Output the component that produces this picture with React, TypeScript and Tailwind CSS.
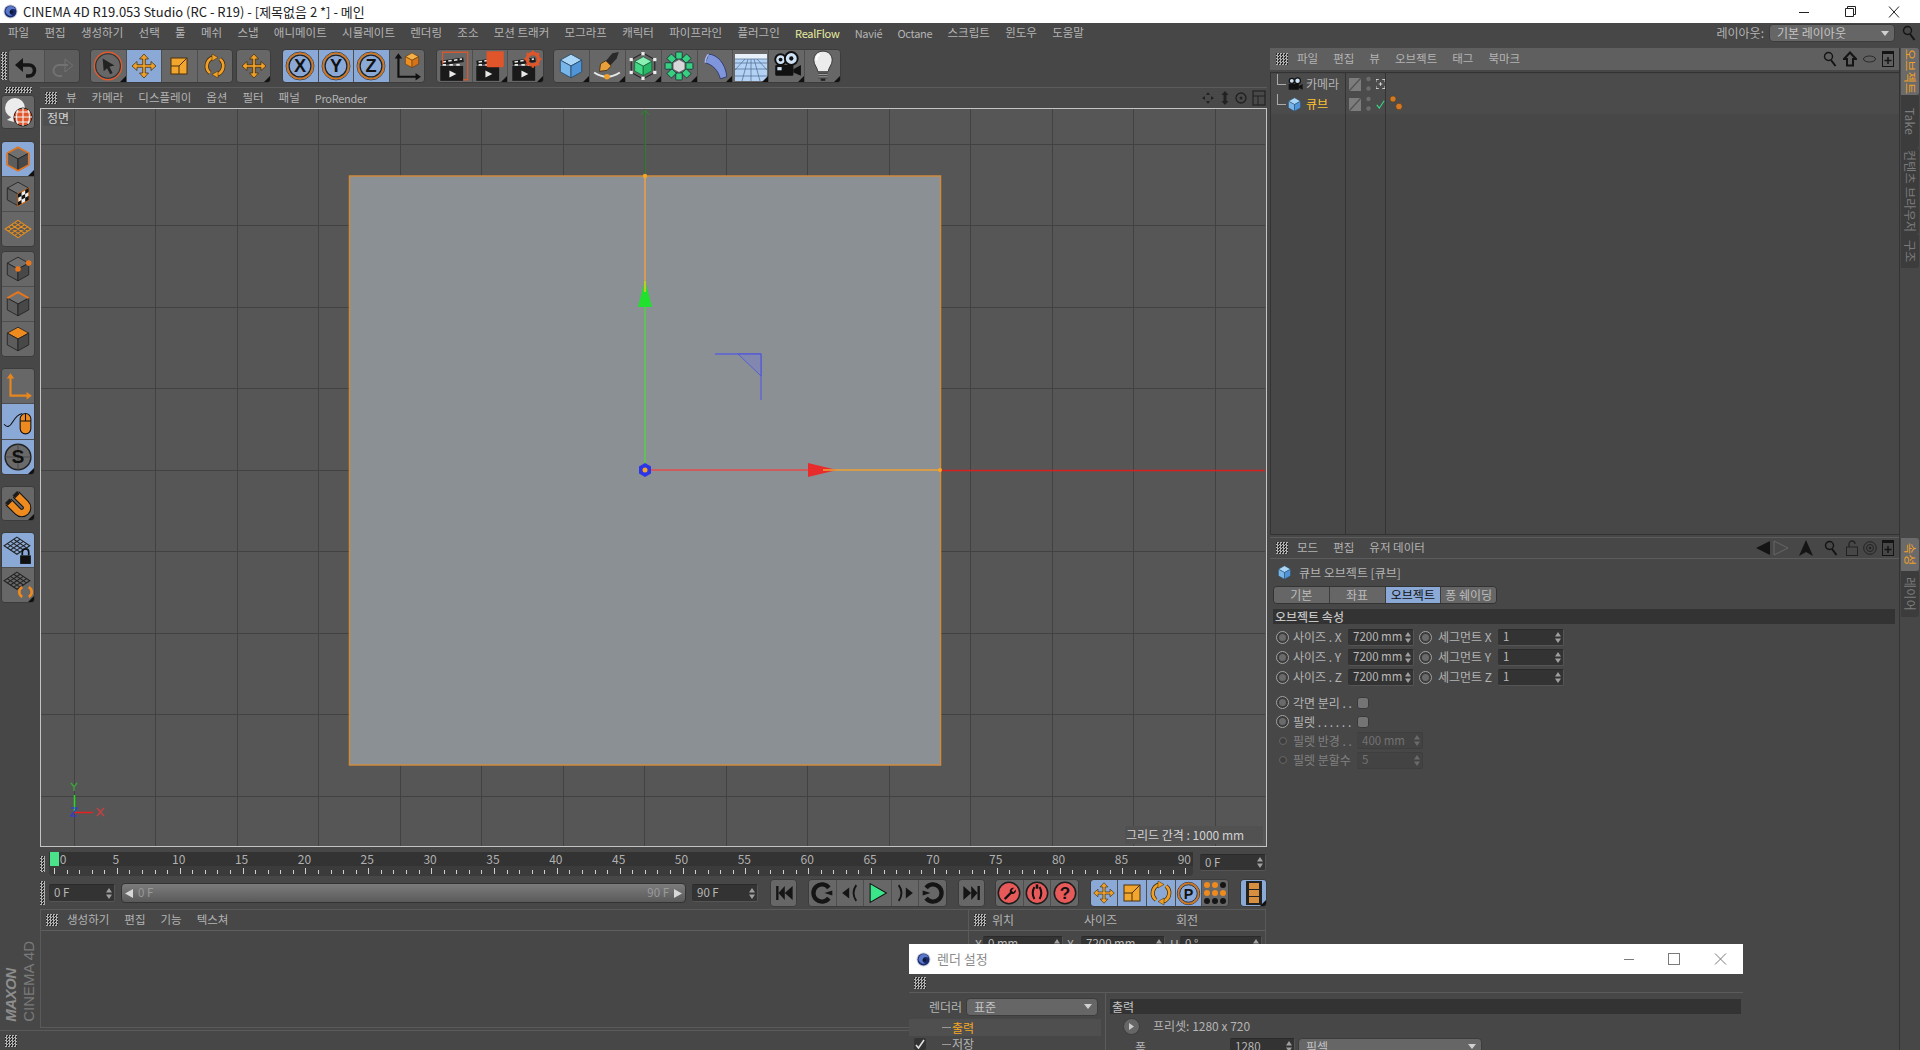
import React from "react"

const ORANGE = "#f0a028"
const MOVE_PATH = "M14 2l4.5 5H15.3v5.7H21V9.500l5 4.500-5 4.500V15.300H15.300V21h3.200L14 26l-4.500-5h3.200V15.300H7v3.200L2 14l5-4.500v3.200h5.700V7H9.500z"

function Grip({ className }: { className: string }) {
  return <div className={"shrink-0 bg-[image:repeating-conic-gradient(#b0b0b0_0%_25%,#2a2a2a_0%_50%)] bg-[length:3px_3px] " + className} />
}

function Ico({ children, size = 28 }: { children: React.ReactNode; size?: number }) {
  return (
    <svg viewBox="0 0 28 28" width={size} height={size} className="shrink-0">
      {children}
    </svg>
  )
}

function Cube({ top = "#a9d6f7", left = "#78b6ea", right = "#4f95d8", stroke = "#2a4a66" }) {
  return (
    <g stroke={stroke} strokeWidth="0.8" strokeLinejoin="round">
      <path d="M14 3l10 5.5-10 5.5L4 8.5z" fill={top} />
      <path d="M4 8.5l10 5.5v11L4 19.5z" fill={left} />
      <path d="M24 8.5l-10 5.5v11l10-5.5z" fill={right} />
    </g>
  )
}

const GrayCube = () => <Cube top="#707070" left="#5c5c5c" right="#484848" stroke="#222" />

function MoveIcon({ size = 28 }: { size?: number }) {
  return (
    <Ico size={size}>
      <path d={MOVE_PATH} fill={ORANGE} stroke="#3a2608" strokeWidth="0.7" />
    </Ico>
  )
}

function ScaleIcon() {
  return (
    <Ico>
      <rect x="6" y="6" width="16" height="16" fill="#f2a62e" stroke="#4a300c" />
      <path d="M6 14h8v8M14 14l8-8" fill="none" stroke="#4a300c" />
    </Ico>
  )
}

function RotateIcon() {
  return (
    <Ico>
      <g fill="none" stroke="#3a2608" strokeWidth="4.2">
        <path d="M9 21A9 9 0 0 1 12 5.500" />
        <path d="M19 7A9 9 0 0 1 16 22.500" />
      </g>
      <g fill="none" stroke={ORANGE} strokeWidth="2.800">
        <path d="M9 21A9 9 0 0 1 12 5.500" />
        <path d="M19 7A9 9 0 0 1 16 22.500" />
      </g>
      <path d="M11 2l6 3.500-6 3.500zM17 19l-6 3.500 6 3.500z" fill={ORANGE} stroke="#3a2608" strokeWidth="0.5" />
    </Ico>
  )
}

function SelectIcon() {
  return (
    <Ico size={30}>
      <circle cx="14" cy="14" r="12.8" fill="none" stroke="#e05a2a" strokeWidth="1.3" />
      <circle cx="14" cy="14" r="11.5" fill="none" stroke="#2f2f2f" strokeWidth="1" />
      <path d="M9 7l11 6.500-4.700 1.300 3 5.700-2.200 1.200-3-5.700L10 19z" fill="#222" />
    </Ico>
  )
}

function AxisLetter({ l }: { l: string }) {
  return (
    <Ico size={30}>
      <circle cx="14" cy="14" r="13" fill="none" stroke="#2a2a2a" strokeWidth="0.8" />
      <circle cx="14" cy="14" r="11.8" fill="none" stroke="#d4761c" strokeWidth="1.8" />
      <circle cx="14" cy="14" r="10.2" fill="none" stroke="#222" strokeWidth="1.2" />
      <text x="14" y="20" textAnchor="middle" fontSize="17" fontWeight="700" fontFamily="Liberation Sans" fill="#111">{l}</text>
    </Ico>
  )
}

function CoordIcon() {
  return (
    <Ico size={30}>
      <path d="M6 6v18h19" fill="none" stroke="#111" strokeWidth="2" />
      <path d="M6 2l-3.500 5h7zM27 24l-5-3.500v7z" fill="#111" />
      <g transform="translate(10 0) scale(0.62)">
        <Cube top="#f6b048" left="#ee8f22" right="#d4741a" stroke="#5a3208" />
      </g>
    </Ico>
  )
}

function Clapper({ extra }: { extra?: React.ReactNode }) {
  return (
    <Ico size={32}>
      <rect x="2" y="14" width="20" height="13" fill="#1a1a1a" />
      <path d="M2 9.500l20-3 .6 4-20 3z" fill="#1a1a1a" />
      <path d="M4 10.500l3-.5M9 9.700l3-.5M14 9l3-.5M19 8.200l2-.3M4 13h3M10 13h3M16 13h3" stroke="#e8e8e8" strokeWidth="1.4" />
      <path d="M10 18l6 3-6 3z" fill="#e8e8e8" />
      {extra}
    </Ico>
  )
}

function Gear() {
  return (
    <g>
      <circle cx="20" cy="8" r="5" fill="none" stroke="#e0562a" strokeWidth="3" />
      <path d="M20 .5v3M20 12.500v3M12.500 8h3M24.500 8h3M14.700 2.700l2 2M23.300 11.300l2 2M14.700 13.300l2-2M23.300 4.700l2-2" stroke="#e0562a" strokeWidth="2" />
    </g>
  )
}

function PenIcon() {
  return (
    <Ico size={30}>
      <path d="M19 2l6-1-2 6-10 11-4-4z" fill="#2a2a2a" />
      <path d="M13 9l5 5-4 4-7 1 1-7z" fill="#e8a03a" stroke="#3a2608" strokeWidth="0.7" />
      <path d="M2 20q12 8 24 0" fill="none" stroke="#e8e8e8" strokeWidth="1.8" />
      <circle cx="14" cy="24" r="2.6" fill={ORANGE} />
    </Ico>
  )
}

function GreenCube() {
  return (
    <Ico size={30}>
      <g transform="translate(3 3) scale(0.8)">
        <Cube top="#8af0b4" left="#40d884" right="#28b868" stroke="#145a34" />
      </g>
      <path d="M3 8l11-6 11 6v12l-11 6-11-6z" fill="none" stroke="#222" />
      <g fill="#eee">
        <rect x="1.5" y="6.5" width="3" height="3" />
        <rect x="12.5" y="1" width="3" height="3" />
        <rect x="23.5" y="6.5" width="3" height="3" />
        <rect x="1.5" y="18.5" width="3" height="3" />
        <rect x="12.5" y="24" width="3" height="3" />
        <rect x="23.5" y="18.5" width="3" height="3" />
      </g>
    </Ico>
  )
}

function FlowerIcon() {
  const petals = [0, 45, 90, 135, 180, 225, 270, 315]
  return (
    <Ico size={30}>
      {petals.map((a) => (
        <rect key={a} x="11" y="1" width="6" height="6.500" rx="0.5" fill="#38d080" stroke="#123" strokeWidth="0.7" transform={`rotate(${a} 14 14)`} />
      ))}
      <path d="M14 8l5.500 3v6L14 20l-5.500-3v-6z" fill="#d8d8d8" stroke="#555" strokeWidth="0.6" />
    </Ico>
  )
}

function BendIcon() {
  return (
    <Ico size={30}>
      <path d="M8 3c8 0 16 9 17 21l-6 2c-2-8-7-13-14-15z" fill="#7f95dc" stroke="#2c3566" strokeWidth="0.8" />
      <path d="M8 3c-2 2-3 5-3 8" fill="none" stroke="#aab8ee" strokeWidth="1.5" />
    </Ico>
  )
}

function FloorIcon() {
  return (
    <svg width="32" height="32" viewBox="0 0 32 32">
      <rect x="0" y="4" width="32" height="5" fill="#e8f0fa" />
      <rect x="0" y="9" width="32" height="22" fill="#b4d2f4" />
      <g stroke="#4a6a90" strokeWidth="0.7">
        <path d="M0 9h32M0 13h32M0 19h32M0 26h32M10 9L0 20M13 9L7 31M16 9v22M19 9l6 22M22 9l10 11" />
      </g>
    </svg>
  )
}

function CameraIcon() {
  return (
    <Ico size={30}>
      <circle cx="8" cy="8" r="5" fill="#cfe2f6" stroke="#111" strokeWidth="1.8" />
      <circle cx="8" cy="8" r="1.8" fill="#111" />
      <circle cx="18" cy="7" r="6" fill="#cfe2f6" stroke="#111" strokeWidth="1.8" />
      <circle cx="18" cy="7" r="2" fill="#111" />
      <rect x="3" y="13" width="17" height="10" rx="1" fill="#111" />
      <path d="M20 17l7-4v10l-7-3z" fill="#111" />
      <rect x="5" y="15" width="4" height="3" fill="#cfe2f6" />
    </Ico>
  )
}

function BulbIcon() {
  return (
    <Ico size={32}>
      <path d="M14 1c5 0 8 3.500 8 8 0 4-3 6-3.500 10h-9C9 15 6 13 6 9c0-4.500 3-8 8-8z" fill="#ececec" stroke="#333" strokeWidth="0.8" />
      <path d="M11 4c-2 1-3 3-2.500 5" fill="none" stroke="#fff" strokeWidth="2" />
      <rect x="10" y="20" width="8" height="5" fill="#444" />
      <path d="M10 21.500h8M10 23.500h8" stroke="#ccc" strokeWidth="0.6" />
      <rect x="12" y="25" width="4" height="2" fill="#222" />
    </Ico>
  )
}

function Corner() {
  return <div className="absolute right-0 bottom-0 border-[3px] border-transparent border-r-[#111] border-b-[#111]" />
}

function Btn({ children, on, tri, gray }: { children?: React.ReactNode; on?: boolean; tri?: boolean; gray?: boolean }) {
  return (
    <div
      className={
        "relative flex flex-1 items-center justify-center border-r border-[#4e4e4e] last:border-r-0 " +
        (on ? "bg-[#8aa9d6]" : gray ? "bg-[#5c5c5c]" : "bg-[#676767]")
      }
    >
      {children}
      {tri && <Corner />}
    </div>
  )
}

function Group({ w, ml, children }: { w: string; ml?: string; children: React.ReactNode }) {
  return <div className={"flex h-[34px] shrink-0 overflow-hidden rounded-[4px] border border-[#3c3c3c] " + w + " " + (ml ?? "")}>{children}</div>
}

function Toolbar() {
  return (
    <div className="flex h-[40px] shrink-0 items-start pt-[2px]">
      <Grip className="mt-[3px] ml-[1px] h-[28px] w-[6px]" />
      <Group w="w-[72px]" ml="ml-[1px]">
        <Btn>
          <Ico>
            <path d="M8 13h9a5.500 5.500 0 0 1 0 11h-3" fill="none" stroke="#151515" strokeWidth="3.6" />
            <path d="M11 6v14l-8-7z" fill="#151515" />
          </Ico>
        </Btn>
        <Btn gray>
          <Ico>
            <path d="M20 13h-9a5.500 5.500 0 0 0 0 11h3" fill="none" stroke="#727272" strokeWidth="2" />
            <path d="M17 7v13l8-6.500z" fill="none" stroke="#727272" />
          </Ico>
        </Btn>
      </Group>
      <Group w="w-[143px]" ml="ml-[10px]">
        <Btn tri><SelectIcon /></Btn>
        <Btn on><MoveIcon /></Btn>
        <Btn><ScaleIcon /></Btn>
        <Btn><RotateIcon /></Btn>
      </Group>
      <Group w="w-[35px]" ml="ml-[3px]">
        <Btn tri><MoveIcon /></Btn>
      </Group>
      <Group w="w-[143px]" ml="ml-[11px]">
        <Btn on><AxisLetter l="X" /></Btn>
        <Btn on><AxisLetter l="Y" /></Btn>
        <Btn on><AxisLetter l="Z" /></Btn>
        <Btn><CoordIcon /></Btn>
      </Group>
      <Group w="w-[108px]" ml="ml-[11px]">
        <Btn>
          <Clapper extra={<path d="M4 12V2h22v24h-4" fill="none" stroke="#d05a30" strokeWidth="1.2" />} />
        </Btn>
        <Btn tri>
          <Clapper extra={<rect x="11" y="1" width="15" height="14" rx="1" fill="#e0562a" />} />
        </Btn>
        <Btn tri>
          <Clapper extra={<Gear />} />
        </Btn>
      </Group>
      <Group w="w-[288px]" ml="ml-[9px]">
        <Btn tri><Ico size={30}><Cube /></Ico></Btn>
        <Btn tri><PenIcon /></Btn>
        <Btn tri><GreenCube /></Btn>
        <Btn tri><FlowerIcon /></Btn>
        <Btn tri><BendIcon /></Btn>
        <Btn tri><FloorIcon /></Btn>
        <Btn tri><CameraIcon /></Btn>
        <Btn tri><BulbIcon /></Btn>
      </Group>
    </div>
  )
}

function GridDiamond({ color = "#e88f1e", bg = "none" }: { color?: string; bg?: string }) {
  return (
    <g stroke={color} strokeWidth="1" fill={bg}>
      <path d="M14 6l12 8-12 8-12-8z" />
      <path d="M11 8l12 8M8 10l12 8M5 12l12 8M17 8L5 16M20 10L8 18M23 12L11 20" fill="none" />
    </g>
  )
}

function SideBtn({ children, on, tri }: { children: React.ReactNode; on?: boolean; tri?: boolean }) {
  return (
    <div className={"relative flex flex-1 items-center justify-center border-b border-[#4e4e4e] last:border-b-0 " + (on ? "bg-[#8aa9d6]" : "bg-[#676767]")}>
      {children}
      {tri && <Corner />}
    </div>
  )
}

function SideGroup({ h, mt, children }: { h: string; mt: string; children: React.ReactNode }) {
  return <div className={"ml-[1px] flex w-[34px] shrink-0 flex-col overflow-hidden rounded-[4px] border border-[#3c3c3c] " + h + " " + mt}>{children}</div>
}

function SideTools() {
  return (
    <div className="flex w-[40px] shrink-0 flex-col">
      <Grip className="ml-[5px] h-[6px] w-[27px]" />
      <SideGroup h="h-[34px]" mt="mt-[2px]">
        <SideBtn>
          <svg width="32" height="32" viewBox="0 0 32 32">
            <circle cx="13" cy="12" r="10" fill="#ececec" />
            <path d="M5 24l6-4 1 6z" fill="#eee" />
            <circle cx="21" cy="21" r="9" fill="#e0562a" stroke="#222" />
            <path d="M12 21h18M21 12v18M14 16h14M14 26h14M16 14q-3 7 0 14M26 14q3 7 0 14" stroke="#f4f4f4" strokeWidth="1.1" fill="none" />
          </svg>
        </SideBtn>
      </SideGroup>
      <SideGroup h="h-[106px]" mt="mt-[12px]">
        <SideBtn on tri>
          <Ico size={30}>
            <GrayCube />
            <path d="M14 3l10 5.500v11L14 25 4 19.500v-11z" fill="none" stroke="#e8761c" strokeWidth="1.5" />
          </Ico>
        </SideBtn>
        <SideBtn>
          <Ico size={30}>
            <GrayCube />
            <path d="M14 14l10-5.500v11L14 25z" fill="#eee" stroke="#e8761c" />
            <path d="M14 14l3.300-1.800v3.600L14 17.600zM20.700 10.300L24 8.500v3.600l-3.300 1.800zM17.300 15.800l3.400-1.900v3.600l-3.400 1.900zM14 21.400l3.300-1.800v3.600L14 25zM20.700 17.500l3.300-1.800v3.800l-3.300 1.800z" fill="#111" />
          </Ico>
        </SideBtn>
        <SideBtn>
          <Ico size={30}><GridDiamond bg="#5a5a5a" /></Ico>
        </SideBtn>
      </SideGroup>
      <SideGroup h="h-[106px]" mt="mt-[4px]">
        <SideBtn>
          <Ico size={30}>
            <GrayCube />
            <circle cx="14" cy="14" r="2.6" fill="#e8761c" />
            <circle cx="24" cy="8.500" r="2.6" fill="#e8761c" />
          </Ico>
        </SideBtn>
        <SideBtn>
          <Ico size={30}>
            <GrayCube />
            <path d="M4 8.500L14 3l10 5.500" fill="none" stroke="#e8761c" strokeWidth="1.8" />
          </Ico>
        </SideBtn>
        <SideBtn>
          <Ico size={30}>
            <Cube top="#ee8a1e" left="#5c5c5c" right="#484848" stroke="#222" />
          </Ico>
        </SideBtn>
      </SideGroup>
      <SideGroup h="h-[107px]" mt="mt-[11px]">
        <SideBtn>
          <Ico size={30}>
            <path d="M7 6v17h17" fill="none" stroke="#e8861e" strokeWidth="2" />
            <path d="M7 2l-3.500 5h7zM27 23l-5-3.500v7z" fill="#e8861e" />
          </Ico>
        </SideBtn>
        <SideBtn on>
          <Ico size={30}>
            <path d="M1 17q4 5 8-2t9-8" fill="none" stroke="#111" />
            <rect x="16" y="7" width="10" height="19" rx="5" fill="#ee8a1e" stroke="#111" />
            <path d="M16 14h10M21 7v7" stroke="#111" />
          </Ico>
        </SideBtn>
        <SideBtn on tri>
          <Ico size={30}>
            <circle cx="14" cy="14" r="12" fill="#6a6a6a" stroke="#222" strokeWidth="1.4" />
            <path d="M2 14h24M14 2v24" stroke="#4a4a4a" />
            <text x="14" y="20" textAnchor="middle" fontSize="18" fontWeight="700" fontFamily="Liberation Sans" fill="#111">S</text>
          </Ico>
        </SideBtn>
      </SideGroup>
      <SideGroup h="h-[35px]" mt="mt-[11px]">
        <SideBtn tri>
          <Ico size={30}>
            <path d="M4 11l9 9a4.500 4.500 0 0 0 7-7l-9-9" fill="none" stroke="#141414" strokeWidth="8" transform="translate(1 1)" />
            <path d="M4 11l9 9a4.500 4.500 0 0 0 7-7l-9-9" fill="none" stroke="#ee8a1e" strokeWidth="6" transform="translate(1 1)" />
            <path d="M3 10l2.500 2.500M10 3l2.500 2.500" stroke="#1c1c1c" strokeWidth="6" transform="translate(1 1)" />
          </Ico>
        </SideBtn>
      </SideGroup>
      <SideGroup h="h-[71px]" mt="mt-[11px]">
        <SideBtn on>
          <Ico size={30}>
            <g transform="translate(-1 -4)"><GridDiamond color="#222" /></g>
            <rect x="16" y="19" width="10" height="8" fill="#111" />
            <path d="M18 19v-3a3 3 0 0 1 6 0v3" fill="none" stroke="#111" strokeWidth="1.6" />
          </Ico>
        </SideBtn>
        <SideBtn tri>
          <Ico size={30}>
            <g transform="translate(-1 -4)"><GridDiamond color="#222" /></g>
            <g fill="none" stroke="#ee8a1e" strokeWidth="2.4">
              <path d="M18 25a5 5 0 0 1 0-9" />
              <path d="M24 16a5 5 0 0 1 0 9" />
            </g>
          </Ico>
        </SideBtn>
      </SideGroup>
      <div className="mt-auto mb-[8px] ml-[3px] flex rotate-180 flex-col items-start gap-[3px] self-start leading-none whitespace-nowrap [writing-mode:vertical-rl] font-['Liberation_Sans',sans-serif]">
        <span className="text-[15px] font-bold tracking-[-0.5px] text-[#8e8e8e] italic">MAXON</span>
        <span className="text-[15px] text-[#7a7a7a]">CINEMA 4D</span>
      </div>
    </div>
  )
}

function MenuText({ items }: { items: string[] }) {
  return (
    <>
      {items.map((m) => (
        <span key={m} className={"whitespace-nowrap " + (/^[A-Za-zé]+$/.test(m) ? "text-[11px] tracking-[-0.3px]" : "")}>{m}</span>
      ))}
    </>
  )
}

function ViewportScene() {
  const vx = [74, 155, 237, 318, 400, 481, 563, 726, 807, 889, 970, 1052, 1133, 1215]
  const hy = [144, 225, 307, 388, 551, 633, 714, 796]
  return (
    <svg width="1224" height="737" viewBox="41 109 1224 737" className="block">
      <g stroke="#424242" strokeWidth="1">
        {vx.map((x) => <line key={x} x1={x + 0.5} x2={x + 0.5} y1="109" y2="846" />)}
        {hy.map((y) => <line key={y} y1={y + 0.5} y2={y + 0.5} x1="41" x2="1265" />)}
        <line x1="41" x2="1265" y1="470.5" y2="470.5" />
        <line x1="644.5" x2="644.5" y1="109" y2="846" />
      </g>
      <rect x="349.5" y="176" width="591" height="589" fill="#8b9095" stroke="#cf8a3e" strokeWidth="1.5" />
      <line x1="645" x2="645" y1="111" y2="176" stroke="#2d8a2d" />
      <path d="M641 115l4-5 4 5" fill="none" stroke="#2d8a2d" />
      <line x1="645" x2="645" y1="176" y2="290" stroke="#d89a58" strokeWidth="2" />
      <line x1="645" x2="645" y1="306" y2="466" stroke="#62c05a" strokeWidth="2" />
      <path d="M645 280l7 27h-14z" fill="#22e02e" />
      <line x1="645" x2="645" y1="281" y2="292" stroke="#b8d020" strokeWidth="2" />
      <line x1="650" x2="810" y1="470" y2="470" stroke="#e8484a" strokeWidth="1.5" />
      <path d="M808 463l29 7-29 7z" fill="#e82c2c" />
      <line x1="823" x2="940" y1="470" y2="470" stroke="#f0a030" strokeWidth="1.5" />
      <line x1="940" x2="1265" y1="470.5" y2="470.5" stroke="#d62020" strokeWidth="1.3" />
      <path d="M715 354h46v46" fill="none" stroke="#5a62d8" strokeWidth="1.3" />
      <path d="M738 354h23v22z" fill="#7c82c0" fillOpacity="0.6" stroke="#4c54d8" strokeWidth="0.8" />
      <path d="M645 463l6 3.500v7l-6 3.500-6-3.500v-7z" fill="#2c36e8" />
      <circle cx="645" cy="470" r="2.5" fill="#f5a623" />
      <circle cx="645" cy="176" r="2.2" fill="#f5a623" />
      <circle cx="940" cy="470" r="2" fill="#f5a623" />
      <line x1="74.5" x2="74.5" y1="795" y2="812" stroke="#20e020" strokeWidth="1.5" />
      <line x1="74" x2="93" y1="812.5" y2="812.5" stroke="#e82020" strokeWidth="1.5" />
      <path d="M71 783l3 4 3-4M74 787v4" fill="none" stroke="#3aa83a" strokeWidth="1.3" />
      <path d="M97 808l7 8M104 808l-7 8" fill="none" stroke="#c84040" strokeWidth="1.3" />
      <path d="M71 808h6l-6 8h6" fill="none" stroke="#2c36e8" strokeWidth="1.2" />
    </svg>
  )
}

function Viewport() {
  return (
    <div className="flex w-[1227px] flex-col">
      <div className="flex h-[21px] shrink-0 items-center border-t border-[#5c5c5c] bg-[#494949] pl-[5px] text-[11.5px] text-[#b4b4b4]">
        <Grip className="h-[12px] w-[12px]" />
        <div className="ml-[9px] flex items-center gap-[15px]">
          <MenuText items={["뷰", "카메라", "디스플레이", "옵션", "필터", "패널", "ProRender"]} />
        </div>
        <svg width="64" height="16" viewBox="0 0 64 16" className="mr-[1px] ml-auto">
          <path d="M6 2l2 3H4zM6 14l2-3H4zM0 8l3-2v4zM12 8l-3-2v4z" fill="#222" />
          <path d="M23 1l3.500 4H24.500v6h2L23 15l-3.500-4h2V5h-2z" fill="#222" />
          <circle cx="39" cy="8" r="5" fill="none" stroke="#222" strokeWidth="1.4" />
          <circle cx="39" cy="8" r="1.5" fill="#222" />
          <rect x="51" y="1" width="12" height="14" fill="none" stroke="#222" strokeWidth="1.2" />
          <path d="M51 6h12M56 6v9" stroke="#222" />
        </svg>
      </div>
      <div className="relative h-[739px] border border-[#c4c4c4] bg-[#565656]">
        <ViewportScene />
        <div className="absolute top-[1px] left-[2px] flex h-[16px] w-[30px] items-center justify-center bg-[#4f4f4f] text-[12px] text-[#d2d2d2]">정면</div>
        <div className="absolute right-[3px] bottom-[2px] flex h-[18px] w-[138px] items-center bg-[#515151] pl-[1px] text-[12px] whitespace-nowrap text-[#d2d2d2]">그리드 간격 : 1000 mm</div>
      </div>
    </div>
  )
}

function Spin({ dim }: { dim?: boolean }) {
  return (
    <svg width="6" height="11" viewBox="0 0 6 11" className="shrink-0">
      <path d="M3 0l3 4.500H0zM3 11l3-4.500H0z" fill={dim ? "#6a6a6a" : "#a0a0a0"} />
    </svg>
  )
}

function Field({ v, w, h = "h-[17px]", dim }: { v: string; w: string; h?: string; dim?: boolean }) {
  return (
    <div
      className={
        "flex shrink-0 items-center justify-between rounded-[2px] border-t border-r border-b pr-[2px] pl-[5px] text-[11.5px] " +
        w + " " + h + " " +
        (dim ? "border-[#3e3e3e] bg-[#434343] text-[#727272]" : "border-[#2a2a2a] border-r-[#555] border-b-[#555] bg-[#333333] text-[#b8b8b8]")
      }
    >
      <span className="whitespace-nowrap">{v}</span>
      <Spin dim={dim} />
    </div>
  )
}

function Timeline() {
  const labels = Array.from({ length: 19 }, (_, i) => i * 5)
  const ticks = Array.from({ length: 91 }, (_, i) => i)
  return (
    <div className="mt-[5px] flex h-[24px] shrink-0 items-start">
      <Grip className="mt-[4px] h-[16px] w-[5px]" />
      <div className="relative ml-[4px] h-[24px] w-[1144px] rounded-b-[4px] bg-[#3b3b3b]">
        <div className="h-[14px] bg-[#333333]" />
        <div className="absolute top-0 left-[1px] h-[14px] w-[9px] bg-[#4be38a]" />
        {labels.map((f) => (
          <span
            key={f}
            className="absolute top-0 -translate-x-1/2 text-[12px] leading-[14px] text-[#b0b0b0]"
            style={{ left: f === 0 ? 14 : 5 + f * 12.57 - 1 }}
          >
            {f}
          </span>
        ))}
        <svg width="1144" height="10" viewBox="0 0 1144 10" className="absolute top-[14px] left-0">
          {ticks.map((f) => {
            const x = Math.round(5 + f * 12.57) + 0.5
            return <line key={f} x1={x} x2={x} y1={f % 5 === 0 ? 2 : 4} y2="8" stroke="#cfcfcf" strokeWidth="1" />
          })}
        </svg>
      </div>
      <Field v="0 F" w="w-[66px] ml-[7px] mt-[2px]" />
    </div>
  )
}

function RedIcon({ children }: { children: React.ReactNode }) {
  return (
    <Ico size={24}>
      <circle cx="14" cy="14" r="12.5" fill="#e85a5a" stroke="#1c1c1c" strokeWidth="1.8" />
      {children}
    </Ico>
  )
}

function TGroup({ w, ml, children }: { w: string; ml: string; children: React.ReactNode }) {
  return <div className={"flex h-[28px] shrink-0 overflow-hidden rounded-[4px] border border-[#3c3c3c] " + w + " " + ml}>{children}</div>
}

function Transport() {
  return (
    <div className="mt-[3px] flex h-[28px] shrink-0 items-center">
      <Grip className="h-[24px] w-[5px]" />
      <Field v="0 F" w="w-[66px] ml-[4px]" h="h-[18px]" />
      <div className="ml-[6px] flex h-[20px] w-[565px] shrink-0 items-center justify-between rounded-[4px] border border-[#333] bg-[linear-gradient(#7c7c7c,#5a5a5a)] px-[3px] text-[11.5px] text-[#9a9a9a]">
        <span className="flex items-center gap-[4px]">
          <svg width="9" height="9" viewBox="0 0 9 9"><path d="M0 4.500L8 0v9z" fill="#d8d8d8" /></svg>
          0 F
        </span>
        <span className="flex items-center gap-[4px]">
          90 F
          <svg width="9" height="9" viewBox="0 0 9 9"><path d="M9 4.500L1 0v9z" fill="#d8d8d8" /></svg>
        </span>
      </div>
      <Field v="90 F" w="w-[66px] ml-[6px]" h="h-[18px]" />
      <TGroup w="w-[27px]" ml="ml-[12px]">
        <Btn>
          <Ico size={22}>
            <path d="M4 5h3v18H4zM15 5v18L7 14zM25 5v18l-10-9z" fill="#151515" />
          </Ico>
        </Btn>
      </TGroup>
      <TGroup w="w-[139px]" ml="ml-[11px]">
        <Btn>
          <Ico size={24}>
            <path d="M22 8A10 10 0 1 0 22 20" fill="none" stroke="#151515" strokeWidth="5" />
            <path d="M17 14l9-3v6z" fill="#151515" />
          </Ico>
        </Btn>
        <Btn>
          <Ico size={22}>
            <path d="M13 7v14l-9-7z" fill="#151515" />
            <path d="M22 4q-7 10 0 20" fill="none" stroke="#151515" strokeWidth="2.4" />
          </Ico>
        </Btn>
        <Btn>
          <Ico size={24}>
            <path d="M6 3l19 11L6 25z" fill="#3be58a" stroke="#111" strokeWidth="1.2" />
          </Ico>
        </Btn>
        <Btn>
          <Ico size={22}>
            <path d="M15 7v14l9-7z" fill="#151515" />
            <path d="M6 4q7 10 0 20" fill="none" stroke="#151515" strokeWidth="2.4" />
          </Ico>
        </Btn>
        <Btn>
          <Ico size={24}>
            <path d="M6 8a10 10 0 1 1 0 12" fill="none" stroke="#151515" strokeWidth="5" />
            <path d="M11 14l-9-3v6z" fill="#151515" />
          </Ico>
        </Btn>
      </TGroup>
      <TGroup w="w-[27px]" ml="ml-[11px]">
        <Btn>
          <Ico size={22}>
            <path d="M3 5v18l10-9zM13 5v18l8-9zM21 5h3v18h-3z" fill="#151515" />
          </Ico>
        </Btn>
      </TGroup>
      <TGroup w="w-[84px]" ml="ml-[10px]">
        <Btn>
          <RedIcon>
            <path d="M8 20l7-7a4 4 0 0 1 5-5l-3 3 2 2 3-3a4 4 0 0 1-5 5l-7 7z" fill="#111" />
          </RedIcon>
        </Btn>
        <Btn>
          <RedIcon>
            <g fill="none" stroke="#111" strokeWidth="2.4">
              <path d="M11 7q-4 7 0 14" />
              <path d="M17 7q4 7 0 14" />
            </g>
            <rect x="12.5" y="4" width="3" height="5" fill="#111" />
          </RedIcon>
        </Btn>
        <Btn>
          <RedIcon>
            <text x="14" y="21" textAnchor="middle" fontSize="20" fontWeight="700" fontFamily="Liberation Sans" fill="#111">?</text>
          </RedIcon>
        </Btn>
      </TGroup>
      <TGroup w="w-[139px]" ml="ml-[11px]">
        <Btn on><MoveIcon size={24} /></Btn>
        <Btn on><ScaleIcon /></Btn>
        <Btn on><RotateIcon /></Btn>
        <Btn on>
          <Ico size={25}>
            <circle cx="14" cy="14" r="12.5" fill="none" stroke="#222" />
            <circle cx="14" cy="14" r="11.3" fill="none" stroke="#d4761c" strokeWidth="1.8" />
            <circle cx="14" cy="14" r="9.8" fill="none" stroke="#222" />
            <text x="14" y="20" textAnchor="middle" fontSize="16" fontWeight="700" fontFamily="Liberation Sans" fill="#111">P</text>
          </Ico>
        </Btn>
        <Btn>
          <svg width="24" height="24" viewBox="0 0 24 24">
            {[4, 12, 20].map((y) =>
              [4, 12, 20].map((x) => (
                <circle key={`${x}-${y}`} cx={x} cy={y} r="3" fill={y === 20 ? "#151515" : x === 20 && y === 4 ? "#151515" : "#ee8a1e"} />
              ))
            )}
          </svg>
        </Btn>
      </TGroup>
      <TGroup w="w-[27px]" ml="ml-[11px]">
        <Btn on tri>
          <svg width="16" height="24" viewBox="0 0 16 24">
            <rect x="0" y="0" width="16" height="24" fill="#222" />
            <rect x="3" y="2" width="10" height="6" fill="#d89040" />
            <rect x="3" y="9" width="10" height="6" fill="#d89040" />
            <rect x="3" y="16" width="10" height="6" fill="#d89040" />
          </svg>
        </Btn>
      </TGroup>
    </div>
  )
}

function BottomPanels() {
  return (
    <div className="mt-[2px] flex h-[119px] shrink-0">
      <div className="flex w-[929px] flex-col border border-[#5a5a5a]">
        <div className="flex h-[21px] shrink-0 items-center border-b border-[#5e5e5e] pl-[5px] text-[11.5px] text-[#b4b4b4]">
          <Grip className="h-[12px] w-[12px]" />
          <div className="ml-[9px] flex gap-[15px]">
            <MenuText items={["생성하기", "편집", "기능", "텍스쳐"]} />
          </div>
        </div>
      </div>
      <div className="flex w-[297px] flex-col border-t border-r border-[#5a5a5a]">
        <div className="flex h-[21px] shrink-0 items-center border-b border-[#5e5e5e] pl-[5px] text-[12px] text-[#b4b4b4]">
          <Grip className="h-[12px] w-[12px]" />
          <span className="ml-[6px] w-[92px]">위치</span>
          <span className="w-[92px]">사이즈</span>
          <span>회전</span>
        </div>
        <div className="mt-[4px] flex items-center text-[12px] text-[#b4b4b4]">
          <span className="ml-[6px] w-[8px]">X</span>
          <Field v="0 mm" w="w-[80px]" />
          <span className="ml-[4px] w-[14px]">X</span>
          <Field v="7200 mm" w="w-[84px]" />
          <span className="ml-[5px] w-[10px]">H</span>
          <Field v="0 °" w="w-[82px]" />
        </div>
      </div>
    </div>
  )
}

function SmallSearch() {
  return (
    <svg width="14" height="16" viewBox="0 0 14 16">
      <circle cx="5.5" cy="5.5" r="4" fill="none" stroke="#141414" strokeWidth="1.4" />
      <path d="M8 9l4.500 6" stroke="#141414" strokeWidth="2" />
    </svg>
  )
}

function PlusBox() {
  return (
    <svg width="12" height="16" viewBox="0 0 12 16">
      <rect x="0.5" y="0.5" width="11" height="15" fill="none" stroke="#141414" />
      <rect x="0" y="0" width="12" height="3" fill="#141414" />
      <path d="M6 6v7M2.500 9.500h7" stroke="#141414" strokeWidth="1.5" />
    </svg>
  )
}

function SlashBox() {
  return (
    <svg width="12" height="13" viewBox="0 0 12 13" className="shrink-0">
      <rect width="12" height="13" fill="#7c7c7c" />
      <path d="M0 13L12 0" stroke="#555" strokeWidth="1.5" />
    </svg>
  )
}

function Dots() {
  return (
    <svg width="5" height="16" viewBox="0 0 5 16" className="mx-[5px] shrink-0">
      <circle cx="2.5" cy="3" r="2.2" fill="#6c6c6c" />
      <circle cx="2.5" cy="12.5" r="2.2" fill="#6c6c6c" />
    </svg>
  )
}

function TreeLine() {
  return <span className="mb-[10px] h-[11px] w-[9px] shrink-0 border-b border-l border-[#aaa]" />
}

function ObjectManager() {
  return (
    <div className="flex h-[487px] shrink-0 flex-col border-b border-[#333]">
      <div className="flex h-[22px] shrink-0 items-center bg-[#5f5f5f] pr-[5px] pl-[6px] text-[11.5px] text-[#b4b4b4]">
        <Grip className="h-[12px] w-[12px]" />
        <div className="ml-[9px] flex gap-[15px]">
          <MenuText items={["파일", "편집", "뷰", "오브젝트", "태그", "북마크"]} />
        </div>
        <div className="ml-auto flex items-center gap-[6px]">
          <SmallSearch />
          <svg width="14" height="16" viewBox="0 0 14 16">
            <path d="M7 1.500L13 8h-3v6.500H4V8H1z" fill="none" stroke="#141414" strokeWidth="2" />
          </svg>
          <svg width="13" height="8" viewBox="0 0 13 8">
            <ellipse cx="6.5" cy="4" rx="6" ry="3" fill="none" stroke="#2a2a2a" />
          </svg>
          <PlusBox />
        </div>
      </div>
      <div className="mt-[2px] flex min-h-0 flex-1 border-t border-l border-[#333] text-[12px]">
        <div className="w-[75px] shrink-0 border-r border-[#333] pt-[1px]">
          <div className="flex h-[20px] items-center bg-[#4b4b4b] pl-[6px] text-[#b4b4b4]">
            <TreeLine />
            <svg width="18" height="14" viewBox="0 0 28 22" className="mr-[2px] shrink-0">
              <circle cx="9" cy="6" r="4" fill="#cfe2f6" stroke="#111" strokeWidth="2" />
              <circle cx="18" cy="6" r="4.5" fill="#cfe2f6" stroke="#111" strokeWidth="2" />
              <rect x="4" y="11" width="16" height="9" fill="#111" />
              <path d="M20 14l6-3v9l-6-3z" fill="#111" />
            </svg>
            카메라
          </div>
          <div className="flex h-[20px] items-center bg-[#4b4b4b] pl-[6px] text-[#ffc22e]">
            <TreeLine />
            <Ico size={17}><Cube /></Ico>
            <span className="ml-[3px]">큐브</span>
          </div>
        </div>
        <div className="w-[40px] shrink-0 border-r border-[#333] pt-[1px]">
          <div className="flex h-[20px] items-center bg-[#4b4b4b] pl-[3px]">
            <SlashBox />
            <Dots />
            <svg width="10" height="10" viewBox="0 0 10 10">
              <path d="M0 3V0h3M7 0h3v3M10 7v3H7M3 10H0V7" fill="none" stroke="#ddd" />
              <path d="M5 3v4M3 5h4" stroke="#ddd" />
            </svg>
          </div>
          <div className="flex h-[20px] items-center bg-[#4b4b4b] pl-[3px]">
            <SlashBox />
            <Dots />
            <svg width="11" height="11" viewBox="0 0 11 11">
              <path d="M1 6l3 4 6-9" fill="none" stroke="#38e08a" strokeWidth="1.3" />
            </svg>
          </div>
        </div>
        <div className="flex-1 pt-[1px]">
          <div className="h-[20px] bg-[#4b4b4b]" />
          <div className="h-[20px] bg-[#4b4b4b] pt-[1px] pl-[3px]">
            <svg width="14" height="16" viewBox="0 0 14 16">
              <circle cx="4" cy="4" r="3" fill="#d07a28" stroke="#5a3208" strokeWidth="0.5" />
              <circle cx="10" cy="11.5" r="3.2" fill="#d07a28" stroke="#5a3208" strokeWidth="0.5" />
            </svg>
          </div>
        </div>
      </div>
    </div>
  )
}

function Radio({ dim }: { dim?: boolean }) {
  return (
    <div className={"flex h-[13px] w-[13px] shrink-0 items-center justify-center rounded-full " + (dim ? "" : "border border-[#a4a4a4] bg-[#3c3c3c]")}>
      <div className={dim ? "h-[8px] w-[8px] rounded-full border border-[#666] bg-[#3e3e3e]" : "h-[7px] w-[7px] rounded-full bg-[#6a6a6a]"} />
    </div>
  )
}

function SizeRow({ axis }: { axis: string }) {
  return (
    <div className="flex h-[20px] items-center pl-[6px]">
      <Radio />
      <span className="ml-[4px] w-[55px] whitespace-nowrap">사이즈 . {axis}</span>
      <Field v="7200 mm" w="w-[66px]" />
      <div className="ml-[5px]"><Radio /></div>
      <span className="ml-[6px] w-[60px] whitespace-nowrap">세그먼트 {axis}</span>
      <Field v="1" w="w-[66px]" />
    </div>
  )
}

function Check() {
  return <div className="h-[12px] w-[12px] rounded-[3px] border border-[#3a3a3a] bg-[#747474]" />
}

function AttributeManager() {
  const tabs = ["기본", "좌표", "오브젝트", "퐁 쉐이딩"]
  return (
    <div className="flex min-h-0 flex-1 flex-col pt-[2px] text-[12px] text-[#b4b4b4]">
      <div className="flex h-[22px] shrink-0 items-center border-t border-b border-[#5c5c5c] pr-[5px] pl-[6px] text-[11.5px]">
        <Grip className="h-[12px] w-[12px]" />
        <div className="ml-[9px] flex gap-[15px]">
          <MenuText items={["모드", "편집", "유저 데이터"]} />
        </div>
        <div className="ml-auto flex items-center gap-[5px]">
          <svg width="32" height="16" viewBox="0 0 32 16">
            <path d="M0 8l14-7v14z" fill="#141414" />
            <path d="M32 8L18 1v14z" fill="none" stroke="#666" />
          </svg>
          <svg width="14" height="16" viewBox="0 0 14 16" className="ml-[6px]">
            <path d="M7 0l7 16-7-4-7 4z" fill="#141414" />
          </svg>
          <div className="ml-[6px]"><SmallSearch /></div>
          <svg width="12" height="16" viewBox="0 0 12 16" className="ml-[3px]">
            <path d="M3 7V4a3 3 0 0 1 6 0" fill="none" stroke="#222" strokeWidth="1.3" />
            <rect x="0.5" y="7" width="11" height="8.5" fill="none" stroke="#222" />
          </svg>
          <svg width="14" height="14" viewBox="0 0 14 14">
            <circle cx="7" cy="7" r="6.3" fill="none" stroke="#222" />
            <circle cx="7" cy="7" r="3.5" fill="none" stroke="#222" />
            <circle cx="7" cy="7" r="1.3" fill="#222" />
          </svg>
          <PlusBox />
        </div>
      </div>
      <div className="flex h-[27px] shrink-0 items-center pl-[6px]">
        <Ico size={17}><Cube /></Ico>
        <span className="ml-[6px]">큐브 오브젝트 [큐브]</span>
      </div>
      <div className="ml-[3px] flex h-[18px] w-[224px] shrink-0 overflow-hidden rounded-[4px] border border-[#333]">
        {tabs.map((t) => (
          <div
            key={t}
            className={
              "flex flex-1 items-center justify-center border-r border-[#3c3c3c] whitespace-nowrap last:border-r-0 " +
              (t === "오브젝트" ? "bg-[#8aa9d6] text-[#111]" : "bg-[#666] text-[#bcbcbc]")
            }
          >
            {t}
          </div>
        ))}
      </div>
      <div className="mt-[5px] mr-[4px] ml-[3px] flex h-[15px] shrink-0 items-center bg-[#333] pl-[2px] font-medium text-[#c4c4c4]">오브젝트 속성</div>
      <div className="mt-[3px] flex flex-col">
        <SizeRow axis="X" />
        <SizeRow axis="Y" />
        <SizeRow axis="Z" />
      </div>
      <div className="mt-[6px] flex flex-col">
        <div className="flex h-[19px] items-center pl-[6px]">
          <Radio />
          <span className="ml-[4px] w-[64px] whitespace-nowrap">각면 분리 . .</span>
          <Check />
        </div>
        <div className="flex h-[19px] items-center pl-[6px]">
          <Radio />
          <span className="ml-[4px] w-[64px] whitespace-nowrap">필렛 . . . . . .</span>
          <Check />
        </div>
        <div className="flex h-[19px] items-center pl-[6px] text-[#808080]">
          <Radio dim />
          <span className="ml-[4px] w-[64px] whitespace-nowrap">필렛 반경 . .</span>
          <Field v="400 mm" w="w-[66px]" dim />
        </div>
        <div className="flex h-[20px] items-center pl-[6px] text-[#808080]">
          <Radio dim />
          <span className="ml-[4px] w-[64px] whitespace-nowrap">필렛 분할수</span>
          <Field v="5" w="w-[66px]" dim />
        </div>
      </div>
    </div>
  )
}

function VTab({ label, h, on }: { label: string; h: string; on?: boolean }) {
  return (
    <div
      className={
        "flex w-[18px] items-center justify-center rounded-r-[3px] text-[12px] tracking-[0.3px] whitespace-nowrap [writing-mode:vertical-rl] [text-orientation:sideways] " +
        h + " " +
        (on ? "bg-[#6a6a6a] text-[#f0a028]" : "bg-[#3c3c3c] text-[#7c7c7c]")
      }
    >
      {label}
    </div>
  )
}

function RightSide() {
  return (
    <div className="flex min-h-0 flex-1 pt-[1px] pl-[3px]">
      <div className="flex w-[630px] shrink-0 flex-col border-r border-[#333]">
        <ObjectManager />
        <AttributeManager />
      </div>
      <div className="ml-[1px] flex flex-col">
        <VTab label="오브젝트" h="h-[47px]" on />
        <VTab label="Take" h="h-[53px]" />
        <VTab label="컨텐츠 브라우저" h="h-[86px]" />
        <VTab label="구조" h="h-[34px]" />
        <div className="h-[270px]" />
        <VTab label="속성" h="h-[33px]" on />
        <VTab label="레이어" h="h-[46px]" />
      </div>
    </div>
  )
}

function Dropdown({ label, w }: { label: string; w: string }) {
  return (
    <div className={"flex h-[18px] items-center justify-between rounded-[4px] border border-[#3c3c3c] bg-[#666] pr-[5px] pl-[7px] text-[12px] text-[#c4c4c4] " + w}>
      {label}
      <svg width="8" height="5" viewBox="0 0 8 5"><path d="M0 0h8L4 5z" fill="#d0d0d0" /></svg>
    </div>
  )
}

function AppLogo() {
  return (
    <svg width="15" height="15" viewBox="0 0 15 15" className="shrink-0">
      <circle cx="7.5" cy="7.5" r="7" fill="#c8ccd8" />
      <circle cx="7.5" cy="7.5" r="6" fill="#1a2a70" />
      <path d="M7.500 2a5.500 5.500 0 0 1 5 4 3.500 3.500 0 0 0-6 2 3 3 0 0 0 4 3 5.500 5.500 0 0 1-8-3 5.500 5.500 0 0 1 5-6z" fill="#5a78c8" />
      <circle cx="8.5" cy="8" r="1.8" fill="#101830" />
    </svg>
  )
}

function Dialog() {
  return (
    <div className="absolute top-[944px] left-[909px] flex h-[106px] w-[834px] flex-col bg-[#474747] text-[12px] text-[#b4b4b4]">
      <div className="flex h-[30px] shrink-0 items-center bg-white pl-[7px]">
        <AppLogo />
        <span className="ml-[6px] text-[13px] text-[#8a8a8a]">렌더 설정</span>
        <svg width="104" height="14" viewBox="0 0 104 14" className="mr-[15px] ml-auto">
          <path d="M0 7.500h10" stroke="#7a7a7a" />
          <rect x="44.5" y="1.5" width="11" height="11" fill="none" stroke="#7a7a7a" />
          <path d="M91 1.500l11 11M102 1.500l-11 11" stroke="#7a7a7a" />
        </svg>
      </div>
      <div className="flex h-[19px] shrink-0 items-center border-b border-[#5c5c5c] pl-[5px]">
        <Grip className="h-[12px] w-[12px]" />
      </div>
      <div className="flex min-h-0 flex-1">
        <div className="w-[197px] shrink-0 border-r border-[#5c5c5c] pt-[4px]">
          <div className="flex h-[19px] items-center pl-[20px]">
            <span className="w-[37px] whitespace-nowrap">렌더러</span>
            <Dropdown label="표준" w="w-[132px]" />
          </div>
          <div className="mt-[3px] mr-[4px] flex h-[17px] items-center bg-[#4f4f4f] pl-[33px] text-[#f5a623]">
            <span className="mr-[1px] h-[1px] w-[9px] bg-[#999]" />
            출력
          </div>
          <div className="mt-[1px] flex h-[14px] items-center pl-[5px]">
            <div className="flex h-[12px] w-[12px] items-center justify-center rounded-[2px] bg-[#333]">
              <svg width="10" height="10" viewBox="0 0 10 10"><path d="M1 6l2.500 3L9 1" fill="none" stroke="#e0e0e0" strokeWidth="1.6" /></svg>
            </div>
            <span className="mr-[1px] ml-[16px] h-[1px] w-[9px] bg-[#999]" />
            저장
          </div>
        </div>
        <div className="min-w-0 flex-1 pt-[6px] pr-[2px] pl-[4px]">
          <div className="flex h-[15px] items-center bg-[#333] pl-[2px] text-[#c4c4c4]">출력</div>
          <div className="mt-[3px] flex h-[18px] items-center pl-[13px]">
            <div className="flex h-[17px] w-[17px] items-center justify-center rounded-full border border-[#3c3c3c] bg-[#666]">
              <svg width="5" height="7" viewBox="0 0 5 7"><path d="M0 0l5 3.500L0 7z" fill="#ccc" /></svg>
            </div>
            <span className="ml-[13px]">프리셋: 1280 x 720</span>
          </div>
          <div className="mt-[3px] flex h-[17px] items-center pl-[25px]">
            <span className="w-[95px]">폭</span>
            <Field v="1280" w="w-[65px]" />
            <div className="ml-[3px]"><Dropdown label="픽셀" w="w-[184px]" /></div>
          </div>
        </div>
      </div>
    </div>
  )
}

export default function App() {
  return (
    <div className="relative flex h-[1050px] w-[1920px] flex-col overflow-hidden bg-[#474747] font-['Noto_Sans_CJK_KR','Noto_Sans',sans-serif]">
      <div className="flex h-[23px] shrink-0 items-center bg-white pl-[3px] text-[13px] text-[#222]">
        <AppLogo />
        <span className="ml-[5px]">CINEMA 4D R19.053 Studio (RC - R19) - [제목없음 2 *] - 메인</span>
        <svg width="110" height="14" viewBox="0 0 110 14" className="mr-[11px] ml-auto">
          <path d="M0 7.500h10" stroke="#222" />
          <path d="M46.500 3.500h8v8h-8zM48.500 3.500v-2h8v8h-2" fill="none" stroke="#222" />
          <path d="M90 1.500l10 11M100 1.500l-10 11" stroke="#222" />
        </svg>
      </div>
      <div className="flex h-[24px] shrink-0 items-center pb-[4px] pl-[8px] text-[11.5px] text-[#b4b4b4]">
        <div className="flex items-center gap-[15.3px]">
          <MenuText items={["파일", "편집", "생성하기", "선택", "툴", "메쉬", "스냅", "애니메이트", "시뮬레이트", "렌더링", "조소", "모션 트래커", "모그라프", "캐릭터", "파이프라인", "플러그인"]} />
          <span className="text-[11px] tracking-[-0.3px] text-[#e8eda0]">RealFlow</span>
          <MenuText items={["Navié", "Octane", "스크립트", "윈도우", "도움말"]} />
        </div>
        <span className="ml-auto text-[12px]">레이아웃:</span>
        <div className="ml-[5px]"><Dropdown label="기본 레이아웃" w="w-[126px]" /></div>
        <div className="mr-[4px] ml-[7px]"><SmallSearch /></div>
      </div>
      <div className="flex min-h-0 flex-1">
        <div className="flex w-[1267px] shrink-0 flex-col">
          <Toolbar />
          <div className="flex min-h-0 flex-1">
            <SideTools />
            <div className="flex w-[1227px] flex-col">
              <Viewport />
              <Timeline />
              <Transport />
              <BottomPanels />
            </div>
          </div>
          <div className="flex h-[20px] shrink-0 items-center border-t border-[#5a5a5a] pl-[5px]">
            <Grip className="h-[12px] w-[12px]" />
          </div>
        </div>
        <RightSide />
      </div>
      <Dialog />
    </div>
  )
}
